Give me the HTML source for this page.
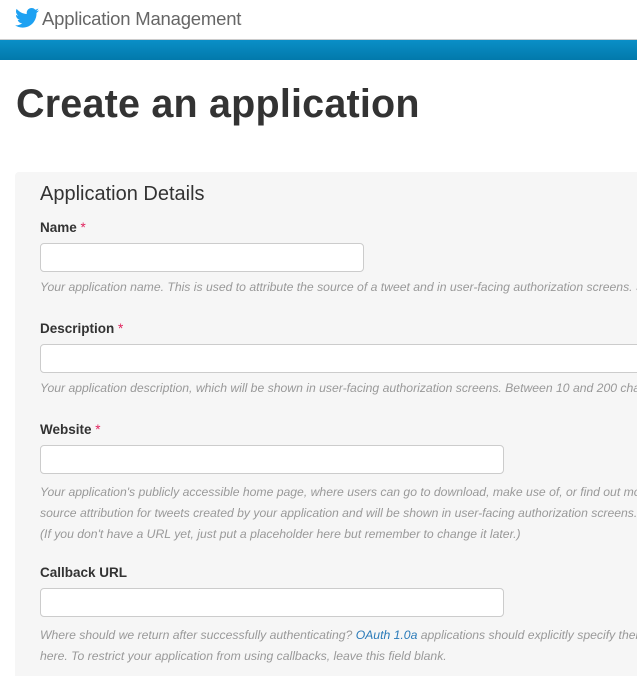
<!DOCTYPE html>
<html><head><style>
html,body{margin:0;width:637px;height:676px;overflow:hidden}
body{background:#fff;font-family:"Liberation Sans",sans-serif;position:relative}
#w{position:absolute;left:0;top:0;width:637px;height:676px;overflow:hidden}
.a{position:absolute;white-space:nowrap}
.hdr{left:42px;top:8px;font-size:18.5px;color:#666;letter-spacing:-0.2px}
.bar{left:0;top:39px;width:637px;height:20px;background:linear-gradient(#0a8fc7,#0279ab);border-top:1px solid #ccc}
h1{position:absolute;left:16px;top:82px;margin:0;font-size:39.5px;font-weight:bold;color:#333;letter-spacing:0.2px;white-space:nowrap}
.panel{left:15px;top:172px;width:640px;height:520px;background:#f6f6f6;border-radius:4px}
.lbl{left:40px;font-size:13.5px;font-weight:bold;color:#333}
.lbl span{color:#e0245e;font-weight:normal}
.inp{left:40px;height:29px;background:#fff;border:1px solid #ccc;border-radius:4px;box-sizing:border-box}
.h{left:40px;font-size:12.2px;font-style:italic;color:#999}
</style></head><body><div id="w">
<svg class="a" style="left:15px;top:8px" width="24" height="20" viewBox="0 0 24 20"><path fill="#1da1f2" d="M24 2.4c-.9.4-1.8.6-2.8.8 1-.6 1.8-1.6 2.2-2.7-1 .6-2 1-3.1 1.2C19.3.6 18 0 16.6 0c-2.7 0-4.9 2.2-4.9 4.9 0 .4 0 .8.1 1.1C7.7 5.8 4.1 3.9 1.7.9c-.4.7-.7 1.6-.7 2.5 0 1.7.9 3.2 2.2 4.1-.8 0-1.600-.2-2.200-.6v.1c0 2.4 1.7 4.4 3.900 4.8-.4.1-.8.2-1.3.2-.3 0-.6 0-.9-.1.6 2 2.4 3.4 4.6 3.4-1.7 1.3-3.8 2.1-6.1 2.1-.4 0-.8 0-1.2-.1C2.2 18.8 4.8 19.6 7.5 19.6c9.1 0 14-7.5 14-14v-.6c1-.7 1.8-1.6 2.5-2.6z"/></svg>
<div class="a hdr">Application Management</div>
<div class="a bar"></div>
<h1>Create an application</h1>
<div class="a panel"></div>
<div class="a" style="left:40px;top:183px;font-size:20px;color:#333">Application Details</div>
<div class="a lbl" style="top:220px">Name <span>*</span></div>
<div class="a inp" style="top:243px;width:324px"></div>
<div class="a h" style="top:280px">Your application name. This is used to attribute the source of a tweet and in user-facing authorization screens. 32 characters max.</div>
<div class="a lbl" style="top:321px">Description <span>*</span></div>
<div class="a inp" style="top:344px;width:640px"></div>
<div class="a h" style="top:381px">Your application description, which will be shown in user-facing authorization screens. Between 10 and 200 characters max.</div>
<div class="a lbl" style="top:422px">Website <span>*</span></div>
<div class="a inp" style="top:445px;width:464px"></div>
<div class="a h" style="top:482px;line-height:21px">Your application's publicly accessible home page, where users can go to download, make use of, or find out more<br>source attribution for tweets created by your application and will be shown in user-facing authorization screens.<br>(If you don't have a URL yet, just put a placeholder here but remember to change it later.)</div>
<div class="a lbl" style="top:565px">Callback URL</div>
<div class="a inp" style="top:588px;width:464px"></div>
<div class="a h" style="top:625px;line-height:21px">Where should we return after successfully authenticating? <span style="color:#2b7bb9">OAuth 1.0a</span> applications should explicitly specify their<br>here. To restrict your application from using callbacks, leave this field blank.</div>
</div></body></html>
